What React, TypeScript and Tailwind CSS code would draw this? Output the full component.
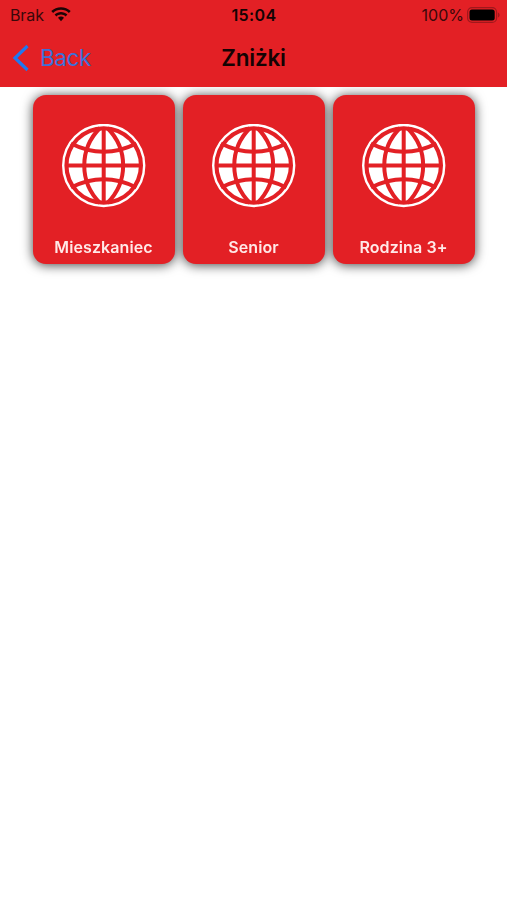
function Globe() {
  return (
    <svg viewBox="0 0 84 84" className="size-[84px]" fill="none">
      <circle cx="41.700" cy="41.500" r="40.500" stroke="#fff" strokeWidth="2.400" />
      <circle cx="41.700" cy="41.500" r="35.200" fill="#fff" />
      <g stroke="#e32025" strokeWidth="4">
        <path d="M41.700 4.500V78.500M4.700 41.500H78.700" />
        <path d="M38 4C17 25 17 58 38 79M45.400 4C66.400 25 66.400 58 45.400 79" />
        <path d="M9 19.500Q41.700 36 74.400 19.500M9 63.500Q41.700 47 74.400 63.500" />
      </g>
    </svg>
  );
}

function Wifi() {
  return (
    <svg viewBox="0 0 20 15" className="h-[15px] w-5" fill="#1c0405">
      <path d="M10 .2C6.300.2 2.900 1.600.3 4L2.100 5.900C4.200 3.900 7 2.800 10 2.800s5.800 1.100 7.900 3.100L19.700 4C17.100 1.600 13.700.2 10 .2Z" />
      <path d="M10 5C7.600 5 5.300 5.900 3.600 7.500L5.400 9.400C6.700 8.200 8.300 7.500 10 7.500s3.300.7 4.600 1.900l1.800-1.900C14.700 5.900 12.400 5 10 5Z" />
      <path d="M10 9.600c-1.100 0-2.200.4-3 1.200l3 3.400 3-3.400c-.8-.8-1.900-1.200-3-1.200Z" />
    </svg>
  );
}

function Battery() {
  return (
    <svg viewBox="0 0 33 16" className="h-4 w-[33px]" fill="none">
      <rect x=".6" y=".6" width="29" height="14.800" rx="4.500" stroke="#a0181c" strokeWidth="1.200" />
      <rect x="2.500" y="2.500" width="25.200" height="11" rx="2.500" fill="#000" />
      <path d="M31 5.500v5c1-.4 1.600-1.400 1.600-2.500S32 5.900 31 5.500Z" fill="#a0181c" />
    </svg>
  );
}

function App() {
  const discounts = ["Mieszkaniec", "Senior", "Rodzina 3+"];

  return (
    <div className="h-[900px] w-[507px] overflow-hidden bg-white font-['Inter',sans-serif]">
      <header className="relative z-10 h-[87px] bg-[#e32025] text-[#140303]">
        <div className="grid h-[29px] grid-cols-3 items-center pr-[7px] pl-[10px] text-base leading-none">
          <div className="flex items-center gap-[7px] tracking-[-0.1px] text-[#3a080a]">
            <span>Brak</span>
            <Wifi />
          </div>
          <div className="pr-0.5 text-center font-semibold tracking-[0.4px]">
            15:04
          </div>
          <div className="flex items-center justify-end gap-[3px] text-[#3a080a]">
            <span>100%</span>
            <Battery />
          </div>
        </div>
        <nav className="grid h-[58px] grid-cols-3 items-center px-3">
          <div className="flex items-center gap-[10px] text-[22.500px] leading-none tracking-[-0.4px] text-[#3c70d8]">
            <svg viewBox="0 0 18 28" className="h-7 w-[18px]" fill="none">
              <path d="M15.500 2L3 14l12.500 12" stroke="#1f78f0" strokeWidth="3.200" />
            </svg>
            <span>Back</span>
          </div>
          <h1 className="text-center text-[22.500px] leading-none font-semibold tracking-[-0.2px]">
            Zniżki
          </h1>
        </nav>
      </header>
      <main className="flex justify-center gap-2 pt-2 drop-shadow-[0_1px_6px_rgba(0,0,0,0.75)]">
        {discounts.map((label) => (
          <div
            className="flex h-[169px] w-[142px] flex-col items-center rounded-[13px] bg-[#e32025] pt-[28.500px]"
            key={label}
          >
            <Globe />
            <div className="mt-[29px] text-base leading-5 font-semibold tracking-[0.1px] text-[#ffe9e8]">
              {label}
            </div>
          </div>
        ))}
      </main>
    </div>
  );
}

export default App;
